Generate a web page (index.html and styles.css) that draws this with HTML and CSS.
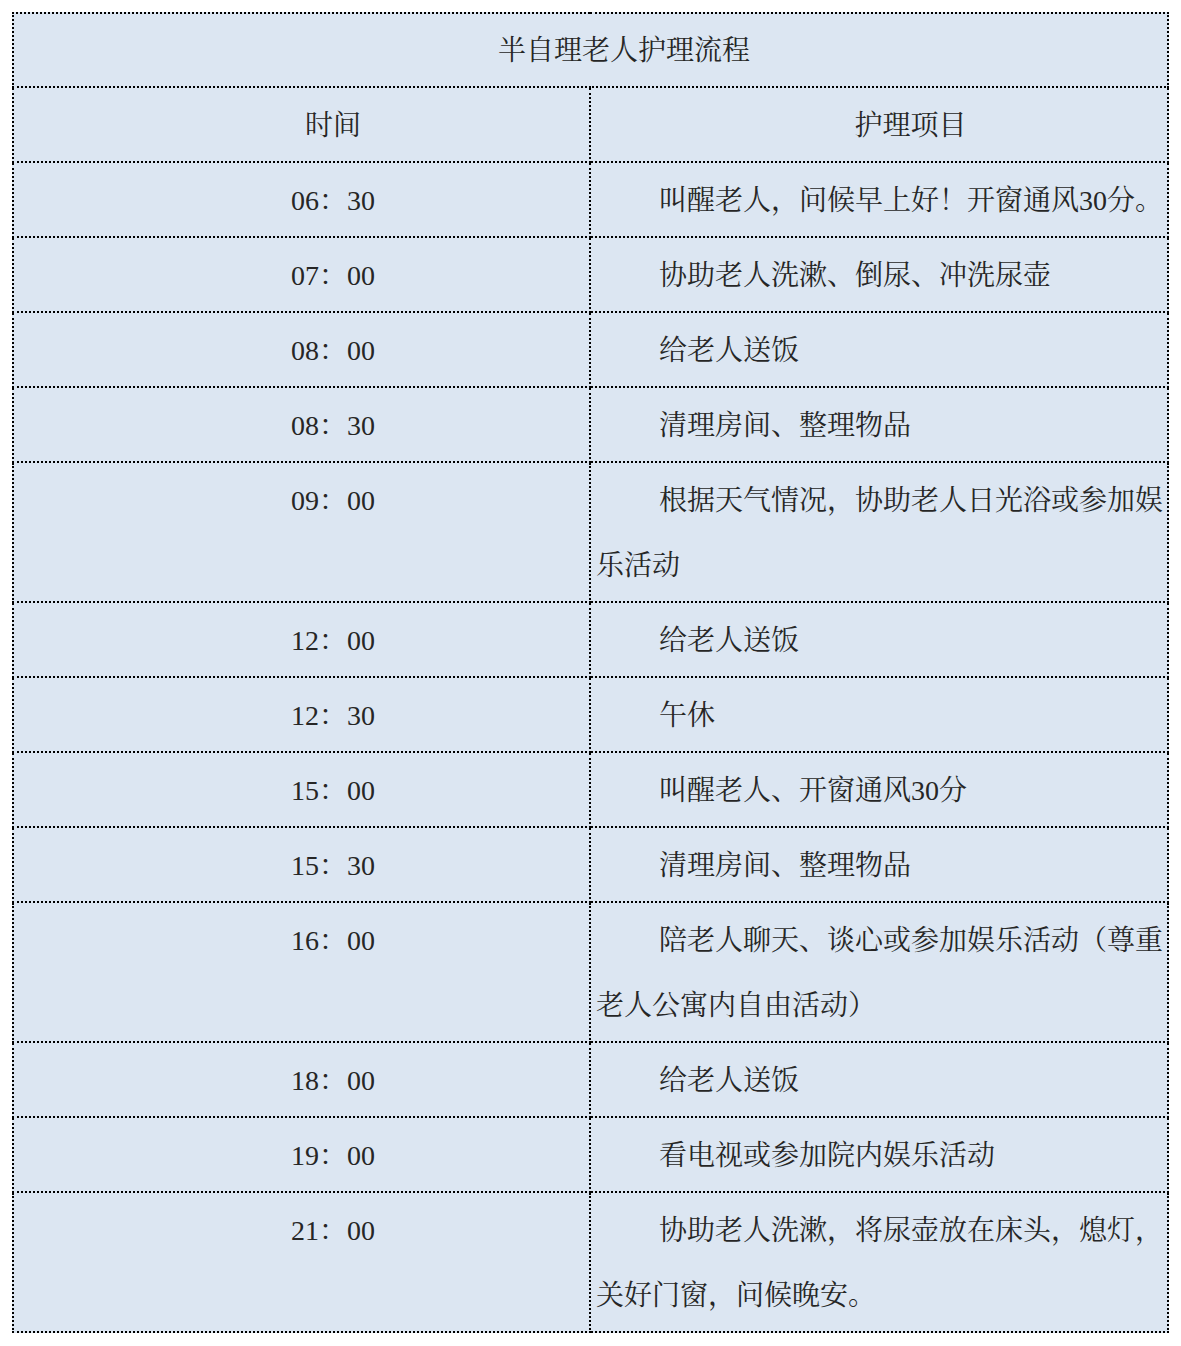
FILE: index.html
```html
<!DOCTYPE html>
<html lang="zh-CN">
<head>
<meta charset="utf-8">
<title>半自理老人护理流程</title>
<link rel="stylesheet" href="styles.css">
</head>
<body>
<table class="care">
  <colgroup><col class="c-time"><col class="c-item"></colgroup>
  <tr class="r1"><td colspan="2" class="title">半自理老人护理流程</td></tr>
  <tr class="r1"><td class="center">时间</td><td class="center">护理项目</td></tr>
  <tr class="r1"><td class="center">06：30</td><td class="item">叫醒老人，问候早上好！开窗通风30分。</td></tr>
  <tr class="r1"><td class="center">07：00</td><td class="item">协助老人洗漱、倒尿、冲洗尿壶</td></tr>
  <tr class="r1"><td class="center">08：00</td><td class="item">给老人送饭</td></tr>
  <tr class="r1"><td class="center">08：30</td><td class="item">清理房间、整理物品</td></tr>
  <tr><td class="center">09：00</td><td class="item">根据天气情况，协助老人日光浴或参加娱乐活动</td></tr>
  <tr class="r1"><td class="center">12：00</td><td class="item">给老人送饭</td></tr>
  <tr class="r1"><td class="center">12：30</td><td class="item">午休</td></tr>
  <tr class="r1"><td class="center">15：00</td><td class="item">叫醒老人、开窗通风30分</td></tr>
  <tr class="r1"><td class="center">15：30</td><td class="item">清理房间、整理物品</td></tr>
  <tr><td class="center">16：00</td><td class="item">陪老人聊天、谈心或参加娱乐活动（尊重老人公寓内自由活动）</td></tr>
  <tr class="r1"><td class="center">18：00</td><td class="item">给老人送饭</td></tr>
  <tr class="r1"><td class="center">19：00</td><td class="item">看电视或参加院内娱乐活动</td></tr>
  <tr><td class="center">21：00</td><td class="item">协助老人洗漱，将尿壶放在床头，熄灯，关好门窗，问候晚安。</td></tr>
</table>
</body>
</html>
```

FILE: styles.css
```css
html, body {
  margin: 0;
  padding: 0;
  background: #ffffff;
}

body {
  padding: 12px;
}

.care {
  width: 1155px;
  border-collapse: collapse;
  table-layout: fixed;
  background: #dce6f2;
  font-family: "Liberation Serif", "Noto Serif CJK SC", "Source Han Serif SC", "Noto Sans CJK SC", serif;
  font-size: 28px;
  color: #262626;
  line-height: 65px;
}

.c-time { width: 577px; }
.c-item { width: 578px; }

.care td {
  border: 2px dotted #000;
  padding: 5px 1px 3px 5px;
  vertical-align: top;
  text-indent: 63px;
}

.care td.center {
  padding-left: 3px;
  padding-right: 3px;
}

.care tr.r1 td {
  height: 65px;
}

.care td.title {
  padding-top: 4px;
  padding-bottom: 3px;
  height: 65px;
}

.center, .title {
  text-align: center;
}

.item {
  text-align: left;
}
```
